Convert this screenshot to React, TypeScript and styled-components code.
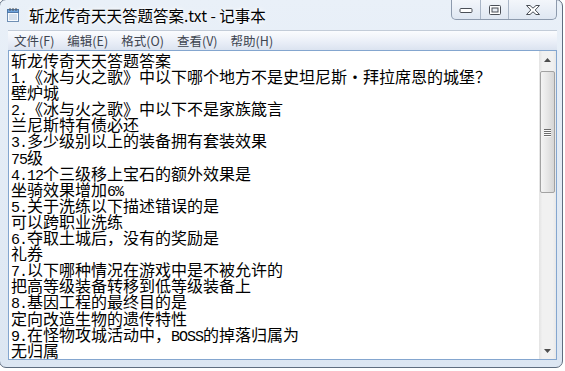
import React from "react";
import styled, { createGlobalStyle } from "styled-components";

const GlobalStyle = createGlobalStyle`
  html, body {
    margin: 0;
    padding: 0;
    background: #ffffff;
    overflow: hidden;
  }
  #root {
    width: 565px;
    height: 371px;
  }
`;

const Window = styled.div`
  box-sizing: border-box;
  width: 564px;
  height: 369px;
  margin: -1px 0 0 -1px;
  border: 1px solid #5f6d7f;
  border-radius: 7px;
  background: linear-gradient(#e9f0f8, #dce6f2);
  display: flex;
  flex-direction: column;
  padding: 0 5px 7px 8px;
  font-family: "Noto Sans CJK SC", sans-serif;
`;

const TitleBar = styled.div`
  height: 30px;
  margin: 0 -5px 0 -8px;
  padding: 0 5px 0 5px;
  display: flex;
  align-items: flex-start;
`;

const TitleIcon = styled.svg`
  margin-top: 7px;
  flex: none;
`;

const TitleText = styled.div`
  margin-left: 8px;
  line-height: 30px;
  font-size: 15.5px;
  color: #000;
  white-space: nowrap;
  text-shadow: 0 0 6px #fff, 0 0 3px #fff;
`;

const Captions = styled.div`
  margin-left: auto;
  height: 19px;
  display: flex;
  border: 1px solid #8d9aad;
  border-top: none;
  border-radius: 0 0 5px 5px;
  background: linear-gradient(#f3f6fb, #dfe7f2);
  overflow: hidden;
`;

const CapButton = styled.div<{ w: number; last?: boolean }>`
  width: ${(p) => p.w}px;
  display: flex;
  align-items: center;
  justify-content: center;
  border-right: ${(p) => (p.last ? "none" : "1px solid #a9b5c6")};
`;

const MenuBar = styled.div`
  height: 19px;
  display: flex;
  align-items: center;
  border-top: 1px solid #c3ccd8;
  background: linear-gradient(#fbfcfe, #e9eef7 60%, #dbe3f0);
`;

const MenuItem = styled.div`
  padding: 0 7px 0 6px;
  font-size: 12.5px;
  color: #3e4550;
  line-height: 19px;
  white-space: nowrap;
`;

const Edit = styled.div`
  flex: 1;
  display: flex;
  background: #fff;
  border: 1px solid #84a6cf;
  min-height: 0;
`;

const TextArea = styled.div`
  flex: 1;
  padding: 1px 0 0 2px;
  overflow: hidden;
  font-family: "Noto Sans CJK SC", sans-serif;
  font-size: 16px;
  line-height: 16.1px;
  color: #000;
  white-space: pre;
`;

const Line = styled.div`
  height: 16.1px;
`;

const Half = styled.span`
  font-family: "Liberation Mono", monospace;
  font-size: 15px;
  letter-spacing: -1px;
`;

const FullDot = styled.span`
  display: inline-block;
  width: 16px;
  text-align: center;
`;

const ScrollBar = styled.div`
  width: 17px;
  display: flex;
  flex-direction: column;
  background: linear-gradient(to right, #e3e3e3, #f1f1f1 20%, #f1f1f1 80%, #e8e8e8);
`;

const ArrowButton = styled.div`
  height: 17px;
  display: flex;
  align-items: center;
  justify-content: center;
`;

const Track = styled.div`
  flex: 1;
  padding-top: 3px;
`;

const Thumb = styled.div`
  box-sizing: border-box;
  height: 122px;
  margin: 0 1px;
  border: 1px solid #a2a2a2;
  border-radius: 2px;
  background: linear-gradient(to right, #f4f4f4, #e6e6e6 50%, #d6d6d6);
  display: flex;
  align-items: center;
  justify-content: center;
`;

const Grip = styled.div`
  display: flex;
  flex-direction: column;
  gap: 1px;
`;

const GripLine = styled.div`
  width: 7px;
  height: 1px;
  background: #6d6d6d;
  box-shadow: 0 1px 0 #fbfbfb;
`;

const lines = [
  "斩龙传奇天天答题答案",
  "1.《冰与火之歌》中以下哪个地方不是史坦尼斯·拜拉席恩的城堡？",
  "壁炉城",
  "2.《冰与火之歌》中以下不是家族箴言",
  "兰尼斯特有债必还",
  "3.多少级别以上的装备拥有套装效果",
  "75级",
  "4.12个三级移上宝石的额外效果是",
  "坐骑效果增加6%",
  "5.关于洗练以下描述错误的是",
  "可以跨职业洗练",
  "6.夺取土城后，没有的奖励是",
  "礼券",
  "7.以下哪种情况在游戏中是不被允许的",
  "把高等级装备转移到低等级装备上",
  "8.基因工程的最终目的是",
  "定向改造生物的遗传特性",
  "9.在怪物攻城活动中，BOSS的掉落归属为",
  "无归属",
];

const menus = ["文件(F)", "编辑(E)", "格式(O)", "查看(V)", "帮助(H)"];

// SimSun style: ascii is half width (8px), the middle dot is full width
const renderLine = (text: string) =>
  text.split(/([\x20-\x7e]+|·)/).map((part, i) => {
    if (!part) return null;
    if (part === "·") return <FullDot key={i}>·</FullDot>;
    if (/^[\x20-\x7e]+$/.test(part)) return <Half key={i}>{part}</Half>;
    return <React.Fragment key={i}>{part}</React.Fragment>;
  });

const NotepadIcon = () => (
  <TitleIcon width="16" height="16" viewBox="0 0 16 16">
    <rect x="2.5" y="2.5" width="11" height="12" fill="#f7fbff" stroke="#6f8fb4" />
    <rect x="2.5" y="2.5" width="11" height="3" fill="#6fa3dc" stroke="#4f78a8" />
    <line x1="4" y1="8" x2="12" y2="8" stroke="#b6c6da" />
    <line x1="4" y1="10" x2="12" y2="10" stroke="#b6c6da" />
    <line x1="4" y1="12" x2="12" y2="12" stroke="#b6c6da" />
    <line x1="5" y1="1" x2="5" y2="4" stroke="#555" />
    <line x1="8" y1="1" x2="8" y2="4" stroke="#555" />
    <line x1="11" y1="1" x2="11" y2="4" stroke="#555" />
  </TitleIcon>
);

export default function App() {
  return (
    <>
      <GlobalStyle />
      <Window>
        <TitleBar>
          <NotepadIcon />
          <TitleText>斩龙传奇天天答题答案.txt - 记事本</TitleText>
          <Captions>
            <CapButton w={28}>
              <svg width="14" height="6" viewBox="0 0 14 6">
                <rect x="1" y="1.5" width="12" height="4" rx="1" fill="#fff" stroke="#4a4f57" />
              </svg>
            </CapButton>
            <CapButton w={27}>
              <svg width="12" height="10" viewBox="0 0 12 10">
                <rect x="0.5" y="0.5" width="11" height="9" rx="1" fill="#fff" stroke="#4a4f57" />
                <rect x="3" y="3" width="6" height="4" fill="#e9eef5" stroke="#4a4f57" />
              </svg>
            </CapButton>
            <CapButton w={47} last>
              <svg width="16" height="10" viewBox="0 0 16 10">
                <path
                  d="M1.5 0.5 H5 L8 3.2 L11 0.5 H14.5 L10.2 5 L14.5 9.5 H11 L8 6.8 L5 9.5 H1.5 L5.8 5 Z"
                  fill="#fff"
                  stroke="#4a4f57"
                  strokeLinejoin="round"
                />
              </svg>
            </CapButton>
          </Captions>
        </TitleBar>
        <MenuBar>
          {menus.map((m) => (
            <MenuItem key={m}>{m}</MenuItem>
          ))}
        </MenuBar>
        <Edit>
          <TextArea>
            {lines.map((l, i) => (
              <Line key={i}>{renderLine(l)}</Line>
            ))}
          </TextArea>
          <ScrollBar>
            <ArrowButton>
              <svg width="7" height="4" viewBox="0 0 7 4">
                <path d="M3.5 0 L7 4 H0 Z" fill="#4d4d4d" />
              </svg>
            </ArrowButton>
            <Track>
              <Thumb>
                <Grip>
                  <GripLine />
                  <GripLine />
                  <GripLine />
                  <GripLine />
                </Grip>
              </Thumb>
            </Track>
            <ArrowButton>
              <svg width="7" height="4" viewBox="0 0 7 4">
                <path d="M0 0 H7 L3.5 4 Z" fill="#4d4d4d" />
              </svg>
            </ArrowButton>
          </ScrollBar>
        </Edit>
      </Window>
    </>
  );
}
